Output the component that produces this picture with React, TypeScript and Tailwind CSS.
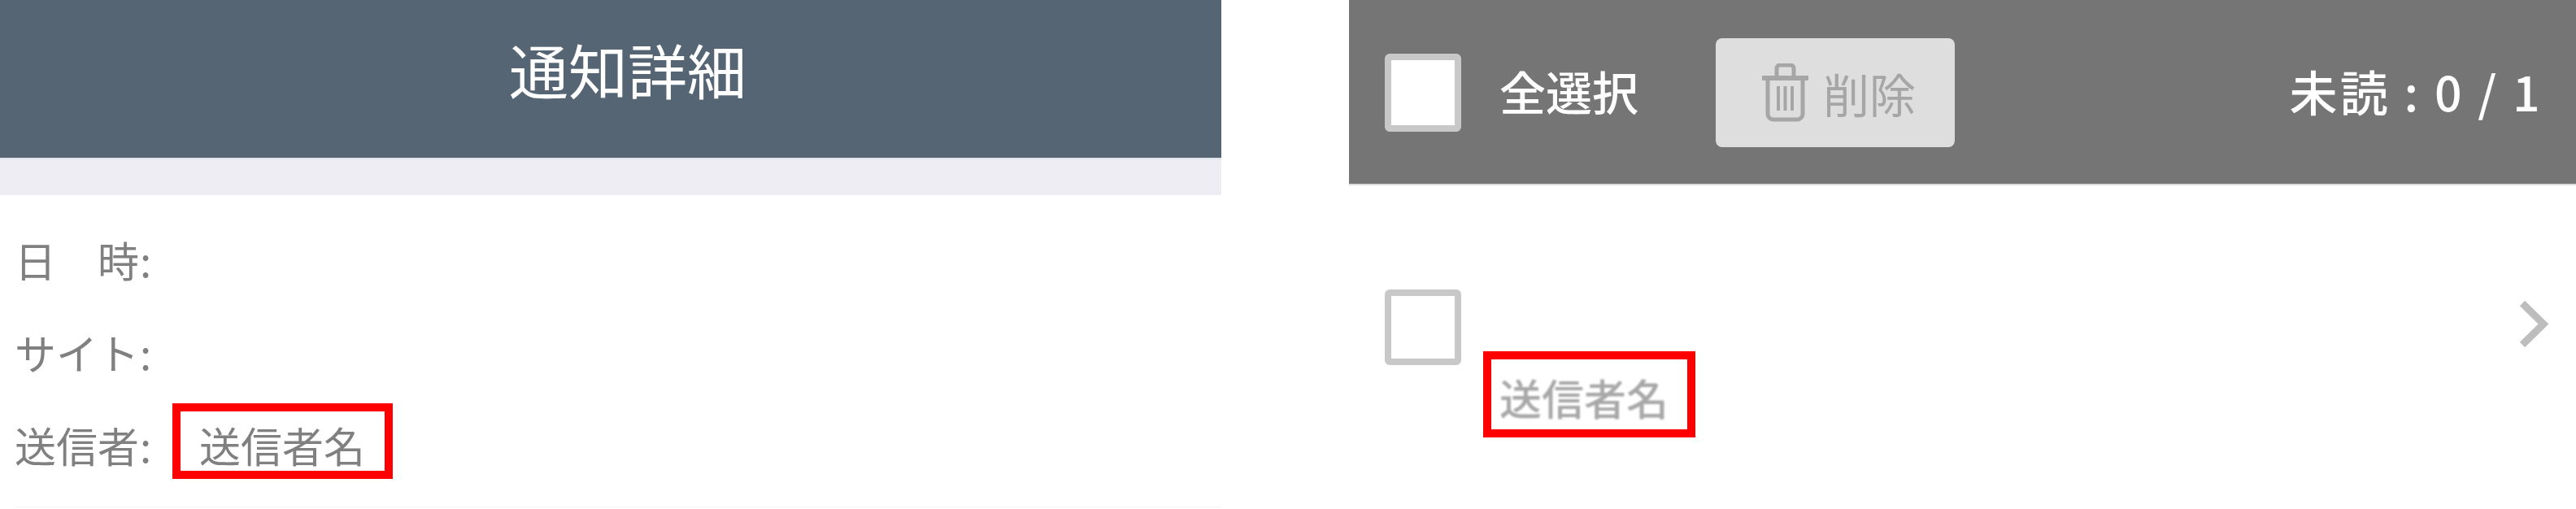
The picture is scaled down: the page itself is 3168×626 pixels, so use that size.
export default function App() {
  const font = "font-['Noto_Sans_CJK_JP','Noto_Sans',sans-serif]";
  return (
    <div className={`flex w-[3168px] h-[626px] overflow-hidden bg-white ${font}`}>
      <div className="w-[1502px] shrink-0 flex flex-col">
        <div className="h-[194px] bg-[#566573] flex items-center justify-center text-white text-[73px] leading-none font-normal">
          <span className="ml-[42px] mb-[26px]">通知詳細</span>
        </div>
        <div className="h-[46px] bg-[#eeedf3] border-t-2 border-[#dfe5ee]" />
        <div className="pt-[22px] text-[#808080] text-[51px] leading-none font-normal">
          <div className="h-[114px] pl-[18px] flex items-center">日　時<span className="ml-[1px]">:</span></div>
          <div className="h-[114px] pl-[18px] flex items-center">サイト<span className="ml-[1px]">:</span></div>
          <div className="h-[114px] pl-[18px] flex items-center">
            <span className="w-[194px]">送信者<span className="ml-[1px]">:</span></span>
            <div className="w-[271px] h-[93px] mb-[9px] pt-[9px] pl-[23px] border-[10px] border-[#ff0000] flex items-center">送信者名</div>
          </div>
        </div>
        <div className="mt-[19px] ml-[18px] h-px bg-[#f5f5f5]" />
      </div>
      <div className="ml-[157px] flex-1 flex flex-col">
        <div className="h-[226px] bg-[#757575] flex items-center pl-[44px] pr-[41px]">
          <div className="w-[94px] h-[96px] mt-[2px] bg-white border-[8px] border-[#c8c8c8] rounded-[6px] blur-[0.6px]" />
          <span className="ml-[47px] mb-[4px] text-white text-[57px] leading-none font-medium blur-[0.5px]">全選択</span>
          <div className="ml-[95px] mt-[2px] w-[294px] h-[134px] bg-[#dedede] rounded-[8px] flex items-center pl-[55px] text-[#a6a6a6] text-[57px] leading-none">
            <svg className="blur-[0.6px]" width="61" height="72" viewBox="0 0 61 72" fill="none" stroke="#a6a6a6" strokeWidth="5">
              <path d="M2 18h57" strokeWidth="6" />
              <path d="M20 16V6a4 4 0 0 1 4-4h13a4 4 0 0 1 4 4v10" />
              <path d="M9 18v44a7 7 0 0 0 7 7h29a7 7 0 0 0 7-7V18" />
              <path d="M22 28v30M30.500 28v30M39 28v30" strokeWidth="4" />
            </svg>
            <span className="ml-[16px] blur-[0.6px]">削除</span>
          </div>
          <span className="ml-auto mb-[4px] text-white text-[59px] leading-none font-medium tracking-[0.055em] whitespace-pre blur-[0.5px]">未読 : 0 / 1</span>
        </div>
        <div className="h-[2px] bg-[#dddddd]" />
        <div className="flex items-start pt-[128px] pl-[44px] pr-[33px]">
          <div className="w-[94px] h-[93px] border-[8px] border-[#c8c8c8] rounded-[6px] blur-[0.6px]" />
          <div className="ml-[27px] mt-[76px] w-[261px] h-[106px] border-[10px] border-[#ff0000] pl-[10px] pt-[8px] flex items-center text-[#a8a8a8] text-[52px] leading-none">
            <span className="font-medium blur-[0.8px]">送信者名</span>
          </div>
          <svg className="ml-auto mt-[14px] blur-[0.6px]" width="37" height="57" viewBox="0 0 37 57" fill="none" stroke="#bdbdbd" strokeWidth="9">
            <path d="M4 3l26 25.500L4 54" />
          </svg>
        </div>
      </div>
    </div>
  );
}
